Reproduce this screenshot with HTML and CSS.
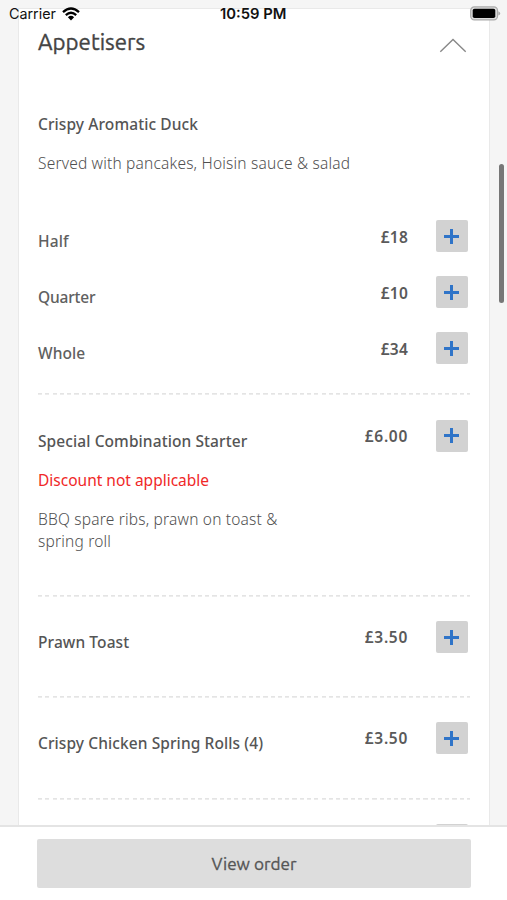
FILE: index.html
```html
<!DOCTYPE html>
<html lang="en">
<head>
<meta charset="utf-8">
<title>Menu</title>
<link rel="stylesheet" href="styles.css">
</head>
<body>
<div class="screen">
  <header class="status">
    <div class="status-left"><span class="carrier">Carrier</span>
      <svg class="wifi" width="18" height="14" viewBox="0 0 18 14" fill="none" stroke="#000" stroke-width="2.3"><path d="M1 5.2Q9-2.2 17 5.2M3.8 8.2Q9 3.4 14.2 8.2"/><path d="M5.9 10.2Q9 7.4 12.1 10.2L9 13.4Z" fill="#000" stroke="none"/></svg>
    </div>
    <span class="clock">10:59 PM</span>
    <svg class="battery" width="31" height="15" viewBox="0 0 31 15"><rect x=".7" y=".9" width="26.8" height="13" rx="3.6" fill="#ddd" stroke="#aaa" stroke-width="1.2"/><rect x="2.7" y="2.7" width="22.6" height="9.4" rx="1.8"/><path d="M28.3 5.2Q30.2 6 30.2 7.4T28.3 9.6Z" fill="#aaa"/></svg>
  </header>
  <main class="card">
    <div class="category">
      <h1>Appetisers</h1>
      <svg class="chevron" width="28" height="15" viewBox="0 0 28 15" fill="none" stroke="#888" stroke-width="1.4"><path d="M1.3 13.7 14 1.5 26.7 13.7"/></svg>
    </div>
    <section class="group">
      <h2>Crispy Aromatic Duck</h2>
      <p class="desc">Served with pancakes, Hoisin sauce &amp; salad</p>
      <div class="options">
        <div class="row"><span class="name">Half</span><span class="price whole">£18</span><button class="add" aria-label="Add"></button></div>
        <div class="row"><span class="name quarter">Quarter</span><span class="price whole">£10</span><button class="add" aria-label="Add"></button></div>
        <div class="row"><span class="name">Whole</span><span class="price whole">£34</span><button class="add" aria-label="Add"></button></div>
      </div>
    </section>
    <section class="item tall">
      <div class="row"><span class="name dark">Special Combination Starter</span><span class="price">£6.00</span><button class="add" aria-label="Add"></button></div>
      <p class="notice">Discount not applicable</p>
      <p class="desc">BBQ spare ribs, prawn on toast &amp;<br>spring roll</p>
    </section>
    <section class="item">
      <div class="row"><span class="name dark">Prawn Toast</span><span class="price">£3.50</span><button class="add" aria-label="Add"></button></div>
    </section>
    <section class="item">
      <div class="row"><span class="name dark">Crispy Chicken Spring Rolls (4)</span><span class="price">£3.50</span><button class="add" aria-label="Add"></button></div>
    </section>
    <section class="item">
      <div class="row"><button class="add" aria-label="Add"></button></div>
    </section>
  </main>
  <div class="scrollbar"></div>
  <footer class="bar"><button class="view">View order</button></footer>
</div>
</body>
</html>
```
FILE: styles.css
```css
* { box-sizing: border-box; margin: 0; padding: 0; }
body { background: #f5f5f5; font-family: "Noto Sans", sans-serif; color: #555; }
.screen { position: relative; width: 507px; height: 900px; overflow: hidden; display: flex; flex-direction: column; padding-top: 8px; }
.status { position: absolute; top: 0; left: 0; width: 507px; height: 27px; display: flex; align-items: center; justify-content: space-between; padding: 0 6px 0 9px; font-family: Inter, sans-serif; color: #111; z-index: 2; }
.status-left { display: flex; align-items: center; gap: 6px; font-size: 14.3px; }
.clock { position: absolute; left: 220px; font-size: 14.8px; font-weight: 600; white-space: nowrap; }
.battery { margin-top: -1px; }
.card { flex: 1; min-height: 0; overflow: hidden; margin: 0 17px 0 18px; padding: 0 19px; background: #fff; border: 1px solid #e9e9e9; border-bottom: 0; }
.category { height: 68px; display: flex; align-items: center; justify-content: space-between; padding-right: 3px; }
h1 { font-family: Ubuntu, "Noto Sans", sans-serif; font-size: 22.3px; font-weight: 400; color: #444; line-height: 30px; margin-top: -2px; -webkit-text-stroke: .35px #444; }
.chevron { margin-top: 4px; }
h2, .name { font-size: 15.5px; font-weight: 500; line-height: 22px; letter-spacing: .09px; white-space: nowrap; color: #606060; }
h2, .dark { color: #555; }
.quarter { letter-spacing: -.2px; }
.group { height: 316px; padding-top: 36px; }
h2, .desc, .notice { width: max-content; }
.desc { font-size: 15.5px; font-weight: 300; line-height: 22px; letter-spacing: .19px; margin-top: 17px; color: #505050; }
.notice { font-size: 15.5px; font-weight: 400; line-height: 22px; color: #f02828; margin-top: 17px; }
.options { display: grid; gap: 24px; margin-top: 46px; }
.row { height: 32px; display: flex; align-items: center; padding-right: 2.5px; }
.name { padding-top: 10px; }
.price { margin-left: auto; margin-right: 27.5px; font-size: 15.5px; font-weight: 600; letter-spacing: .7px; line-height: 22px; color: #5a5a5a; }
.whole { letter-spacing: .2px; margin-top: 1px; }
.add { width: 32px; height: 32px; border: 0; border-radius: 2px; background: linear-gradient(#2f74c8, #2f74c8) center / 15px 3px no-repeat, linear-gradient(#2f74c8, #2f74c8) center / 3px 15px no-repeat, #d2d2d2; }
.row > .add:only-child { margin-left: auto; }
.item { height: 101.3px; padding-top: 26px; background: repeating-linear-gradient(90deg, #e4e4e4 0 4.2px, transparent 4.2px 7.27px) 0 0 / 100% 1.7px no-repeat; }
.tall { height: 202px; padding-top: 26.5px; }
.scrollbar { position: absolute; left: 499px; top: 164px; width: 5px; height: 139px; border-radius: 3px; background: #777; }
.bar { flex: 0 0 75px; background: #fff; border-top: 2px solid #e4e4e4; padding: 12px 36px 0 37px; }
.view { display: block; width: 100%; height: 49px; border: 0; border-radius: 2px; background: #ddd; font: 400 17.2px/49px Ubuntu, "Noto Sans", sans-serif; color: #555; -webkit-text-stroke: .3px #555; }
```
